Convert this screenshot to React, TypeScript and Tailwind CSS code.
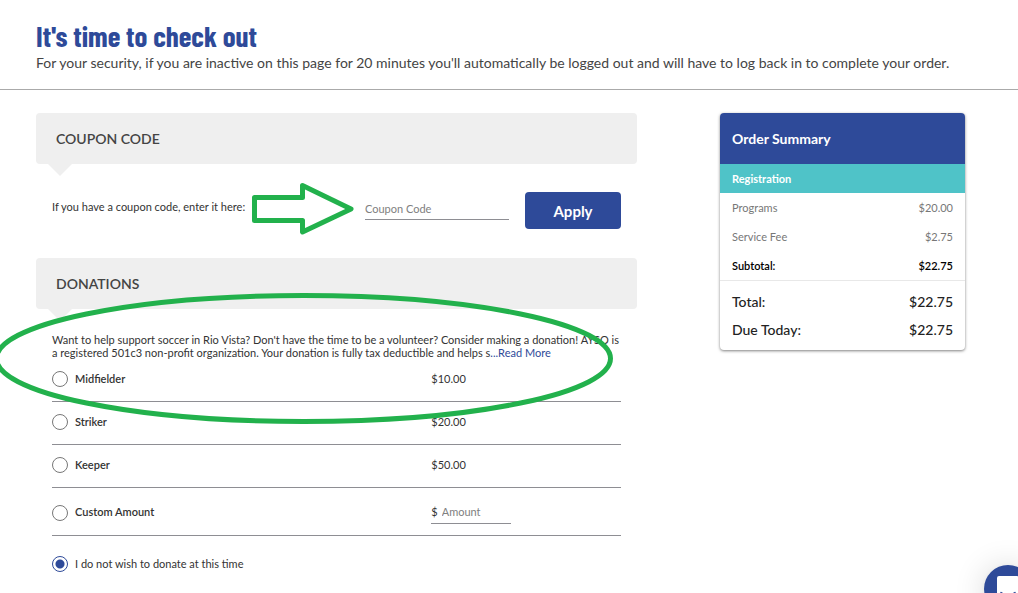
import { useState } from 'react';

const donations = [
  { id: 'midfielder', label: 'Midfielder', price: '$10.00' },
  { id: 'striker', label: 'Striker', price: '$20.00' },
  { id: 'keeper', label: 'Keeper', price: '$50.00' },
];

const fees = [
  { label: 'Programs', value: '$20.00' },
  { label: 'Service Fee', value: '$2.75' },
];

const totals = [
  { label: 'Total:', value: '$22.75' },
  { label: 'Due Today:', value: '$22.75' },
];

const SectionHeader = ({ title }: { title: string }) => (
  <div className="relative flex h-[51px] items-center rounded bg-[#efefef] px-5">
    <h2 className="text-sm font-semibold text-[#444]">{title}</h2>
    <svg className="absolute left-3 top-full" width="24" height="12" aria-hidden="true">
      <path d="M0 0H24L12 12Z" fill="#efefef" />
    </svg>
  </div>
);

type RadioProps = { id: string; checked: boolean; onSelect: (id: string) => void };

const Radio = ({ id, checked, onSelect }: RadioProps) => (
  <input
    type="radio"
    id={id}
    name="donation"
    checked={checked}
    onChange={() => onSelect(id)}
    className="size-4 shrink-0 appearance-none rounded-full border border-[#777] bg-white checked:border-[#2e4a99] checked:bg-[radial-gradient(circle,#2e4a99_4px,transparent_5px)]"
  />
);

const CouponCode = () => (
  <section>
    <SectionHeader title="COUPON CODE" />
    <form className="flex gap-4 px-4 pt-7 pb-[29px]" onSubmit={e => e.preventDefault()}>
      <label htmlFor="coupon" className="flex-1 text-[11px] leading-[30px] text-[#333]">
        If you have a coupon code, enter it here:
      </label>
      <input
        id="coupon"
        type="text"
        placeholder="Coupon Code"
        className="h-7 w-36 border-b border-[#8e8e93] pt-1.5 text-[11px] outline-none placeholder:text-[#808080]"
      />
      <button type="submit" className="h-[37px] w-24 rounded bg-[#2e4a99] pt-0.5 text-[15px] font-bold text-white">
        Apply
      </button>
    </form>
  </section>
);

const Donations = () => {
  const [selected, setSelected] = useState('none');

  return (
    <section>
      <SectionHeader title="DONATIONS" />
      <div className="px-4 pt-6 text-[11px] text-[#333]">
        <p className="leading-[13px]">
          Want to help support soccer in Rio Vista? Don't have the time to be a volunteer? Consider making a donation! AYSO is
          a registered 501c3 non-profit organization. Your donation is fully tax deductible and helps s
          <a href="#more" className="text-[#2e4a99]">...Read More</a>
        </p>
        {donations.map(item => (
          <div key={item.id} className="grid h-[43px] grid-cols-3 items-center border-b border-[#8e8e93] pb-0.5">
            <div className="col-span-2 flex items-center gap-[7px]">
              <Radio id={item.id} checked={selected === item.id} onSelect={setSelected} />
              <label htmlFor={item.id} className="font-semibold">{item.label}</label>
            </div>
            <span>{item.price}</span>
          </div>
        ))}
        <div className="grid h-12 grid-cols-3 items-center border-b border-[#8e8e93] pt-0.5">
          <div className="col-span-2 flex items-center gap-[7px]">
            <Radio id="custom" checked={selected === 'custom'} onSelect={setSelected} />
            <label htmlFor="custom" className="font-semibold">Custom Amount</label>
          </div>
          <div className="flex h-[22px] w-20 items-center gap-1 border-b border-[#8e8e93]">
            <span>$</span>
            <input
              type="text"
              aria-label="Custom amount in dollars"
              placeholder="Amount"
              className="w-full min-w-0 outline-none placeholder:text-[#808080]"
            />
          </div>
        </div>
        <div className="flex h-14 items-center gap-[7px]">
          <Radio id="none" checked={selected === 'none'} onSelect={setSelected} />
          <label htmlFor="none">I do not wish to donate at this time</label>
        </div>
      </div>
    </section>
  );
};

const OrderSummary = () => (
  <aside className="w-[245px] shrink-0 overflow-hidden rounded bg-white shadow-[0_1px_3px_rgba(0,0,0,0.5)]">
    <h2 className="flex h-[51px] items-center bg-[#2e4a99] px-3 text-sm font-bold text-white">Order Summary</h2>
    <h3 className="flex h-[29px] items-center bg-[#4fc3c8] px-3 pt-0.5 text-[11px] font-bold text-white">Registration</h3>
    <dl className="border-b border-[#e8e8e8] px-3 text-[11px]">
      {fees.map(fee => (
        <div key={fee.label} className="flex h-[29px] items-center justify-between pt-0.5 text-[#777]">
          <dt>{fee.label}</dt>
          <dd>{fee.value}</dd>
        </div>
      ))}
      <div className="flex h-[29px] items-center justify-between pt-0.5 font-semibold text-black">
        <dt>Subtotal:</dt>
        <dd>$22.75</dd>
      </div>
    </dl>
    <dl className="px-3 pt-[7px] pb-1.5 text-sm font-medium text-[#222]">
      {totals.map(total => (
        <div key={total.label} className="flex h-7 items-center justify-between">
          <dt>{total.label}</dt>
          <dd>{total.value}</dd>
        </div>
      ))}
    </dl>
  </aside>
);

// Hand-drawn highlights that sit over the page
const Highlights = () => (
  <svg
    className="pointer-events-none absolute left-0 top-0"
    width="640"
    height="440"
    fill="none"
    stroke="#22b14c"
    strokeWidth="5"
    strokeLinejoin="round"
    aria-hidden="true"
  >
    <path d="M254.500 197.500H302.500V185.500L351 209L302.500 232V220.500H254.500Z" />
    <ellipse cx="303.500" cy="358.500" rx="307" ry="63" />
  </svg>
);

const ChatButton = () => (
  <button
    type="button"
    aria-label="Open chat"
    className="fixed -right-3.5 -bottom-5 flex size-12 items-center justify-center rounded-full bg-[#2e4a99] shadow-[0_1px_6px_rgba(0,0,0,0.06),0_2px_32px_rgba(0,0,0,0.16)]"
  >
    <svg width="22" height="26" viewBox="0 0 22 26" aria-hidden="true">
      <path d="M2 0H20Q22 0 22 2V26L17 23H2Q0 23 0 21V2Q0 0 2 0Z" fill="#fff" />
      <path d="M4 16.500Q11 22 18 16.500" fill="none" stroke="#2e4a99" strokeWidth="1.500" strokeLinecap="round" />
    </svg>
  </button>
);

export default function App() {
  return (
    <div className="relative min-h-screen overflow-x-hidden bg-white font-['Lato',sans-serif]">
      <header className="h-[90px] border-b border-[#aaa] px-9 pt-5">
        <h1 className="font-['Barlow_Condensed','Roboto_Condensed','Liberation_Sans_Narrow',sans-serif] text-[29px] leading-8 font-bold text-[#2e4a99]">
          It's time to check out
        </h1>
        <p className="text-sm leading-[22px] text-[#444]">
          For your security, if you are inactive on this page for 20 minutes you'll automatically be logged out and will have to log back in to complete your order.
        </p>
      </header>
      <div className="flex items-start justify-between gap-[83px] pt-[23px] pr-[53px] pl-9">
        <main className="flex-1">
          <CouponCode />
          <Donations />
        </main>
        <OrderSummary />
      </div>
      <Highlights />
      <ChatButton />
    </div>
  );
}
